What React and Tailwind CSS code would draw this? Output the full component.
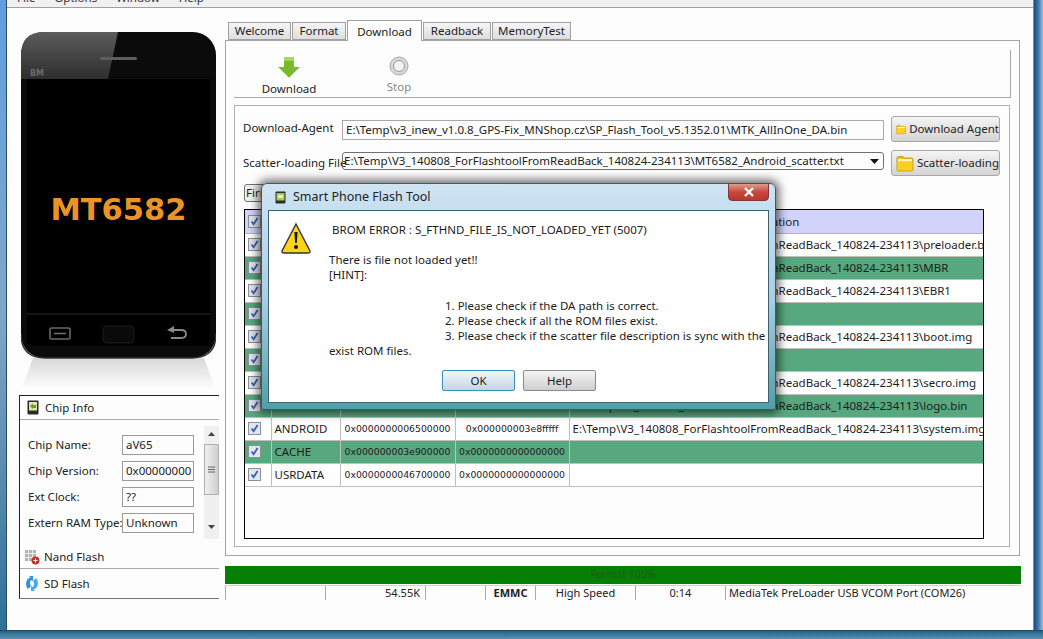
const tabs = [
  { name: "Welcome", w: "w-[63px]" },
  { name: "Format", w: "w-[54px]" },
  { name: "Download", w: "w-[75px]", active: true },
  { name: "Readback", w: "w-[68px]" },
  { name: "MemoryTest", w: "w-[79px]" },
];

const base = "E:\\Temp\\V3_140808_ForFlashtoolFromReadBack_140824-234113\\";

const rows = [
  { loc: base + "preloader.bin" },
  { loc: base + "MBR", green: true },
  { loc: base + "EBR1" },
  { green: true },
  { loc: base + "boot.img" },
  { green: true },
  { loc: base + "secro.img" },
  { loc: base + "logo.bin", green: true },
  { name: "ANDROID", begin: "0x0000000006500000", end: "0x000000003e8fffff", loc: base + "system.img" },
  { name: "CACHE", begin: "0x000000003e900000", end: "0x0000000000000000", green: true },
  { name: "USRDATA", begin: "0x0000000046700000", end: "0x0000000000000000" },
];

const chipFields = [
  ["Chip Name:", "aV65"],
  ["Chip Version:", "0x00000000"],
  ["Ext Clock:", "??"],
  ["Extern RAM Type:", "Unknown"],
];

function Check() {
  return (
    <span className="flex h-[13px] w-[13px] items-center justify-center border border-[#8e8f8f] bg-[#dfe6f2]">
      <svg width="9" height="9" viewBox="0 0 9 9">
        <path d="M1.5 4.5 L3.6 7.2 L7.6 1" fill="none" stroke="#3d5fa8" strokeWidth="1.8" />
      </svg>
    </span>
  );
}

function Folder() {
  return (
    <svg width="18" height="17" viewBox="0 0 18 17">
      <path d="M1 3 Q1 1.5 2.5 1.5 H7 L8.5 3 H16 Q17 3 17 4 V15 Q17 16 16 16 H2 Q1 16 1 15 Z" fill="#f2bc16" stroke="#b98d10" strokeWidth="0.8" />
      <rect x="2" y="4" width="14" height="2.5" fill="#fff3c0" />
      <rect x="1.5" y="6.5" width="15" height="9" fill="#fdd01f" />
    </svg>
  );
}

function FolderButton({ label }) {
  return (
    <button className="flex h-[26px] w-[109px] items-center gap-[3px] rounded-[3px] border border-[#a8a8a8] bg-linear-to-b from-[#f4f4f4] to-[#d4d4d4] pl-[4px] text-[11.5px] whitespace-nowrap text-[#222]">
      <Folder />
      {label}
    </button>
  );
}

function Phone() {
  return (
    <div className="relative ml-[14px] mt-[24px] h-[358px] w-[195px]">
      <svg className="absolute inset-0" width="195" height="358" viewBox="0 0 195 358">
        <defs>
          <linearGradient id="refl" x1="0" y1="0" x2="0" y2="1">
            <stop offset="0" stopColor="#d8d8d8" />
            <stop offset="1" stopColor="#ffffff" />
          </linearGradient>
          <linearGradient id="glare" x1="0" y1="0" x2="0" y2="1">
            <stop offset="0" stopColor="#5c5c5c" />
            <stop offset="1" stopColor="#2e2e2e" />
          </linearGradient>
        </defs>
        <path d="M12 326 H183 Q190 345 195 358 H0 Q5 345 12 326 Z" fill="url(#refl)" />
        <rect x="0" y="0" width="195" height="326" rx="23" fill="#0b0b0b" />
        <path d="M0 326 m0 -24 Q0 326 24 326 H171 Q195 326 195 302" fill="none" stroke="#333" strokeWidth="1.5" />
        <path d="M23 0 H97 L87 47 H0 V23 Q0 0 23 0 Z" fill="url(#glare)" />
        <rect x="79" y="25" width="37" height="3" rx="1.5" fill="#5e5e5e" />
        <text x="9" y="44" fontSize="8" fontFamily="DejaVu Sans, sans-serif" fontWeight="700" fill="#6a6a6a">BM</text>
        <rect x="6" y="47" width="183" height="267" fill="#000" />
        <line x1="6" y1="282" x2="189" y2="282" stroke="#2a2a2a" />
        <rect x="29" y="296" width="20" height="11" rx="1.5" fill="none" stroke="#6a6a6a" strokeWidth="1.6" />
        <line x1="33" y1="301.5" x2="45" y2="301.5" stroke="#6a6a6a" strokeWidth="1.6" />
        <rect x="82" y="294" width="31" height="17" rx="4" fill="#0a0a0a" stroke="#1d1d1d" />
        <path d="M148 298 H160 Q165 298 165 302 Q165 306 160 306 H150" fill="none" stroke="#8a8a8a" strokeWidth="1.8" />
        <path d="M153 294 L146 298 L153 301 Z" fill="#8a8a8a" />
      </svg>
      <div className="absolute inset-x-0 top-[159px] text-center font-['DejaVu_Sans'] text-[30.5px] leading-[38px] font-bold text-[#ea9426]">
        MT6582
      </div>
    </div>
  );
}

function ChipPanel() {
  return (
    <div className="ml-[12px] mt-[5px] h-[204px] w-[200px] border-t border-l border-b border-t-[#222] border-l-[#222] border-b-[#777] text-[11.5px] text-[#222]">
      <div className="flex h-[24px] items-center gap-[6px] border-b border-[#aaa] pl-[7px]">
        <svg width="12" height="15" viewBox="0 0 12 15">
          <rect x="0.5" y="0.5" width="11" height="14" rx="1" fill="#2a2a2a" />
          <rect x="2" y="2" width="8" height="8.5" fill="#dfe8b0" />
          <path d="M3 6 L6 3.5 V5 H9 V8 H6 V9 Z" fill="#6a9a30" />
        </svg>
        Chip Info
      </div>
      <div className="flex h-[125px]">
        <div className="flex w-[184px] flex-col gap-[6px] pl-[8px] pt-[15px]">
          {chipFields.map(([label, value]) => (
            <div key={label} className="flex items-center">
              <span className="w-[94px] whitespace-nowrap">{label}</span>
              <span className="flex h-[20px] w-[72px] items-center border border-[#9a9a9a] pl-[3px]">{value}</span>
            </div>
          ))}
        </div>
        <div className="mt-[6px] flex h-[113px] w-[15px] flex-col items-center bg-[#f0f0f0]">
          <svg className="mt-[6px]" width="7" height="4" viewBox="0 0 7 4">
            <path d="M0 4 L3.5 0 L7 4 Z" fill="#444" />
          </svg>
          <div className="mt-[8px] flex h-[51px] w-[15px] items-center justify-center border border-[#b0b0b0] bg-linear-to-r from-[#f0f0f0] to-[#cfcfcf]">
            <svg width="7" height="7" viewBox="0 0 7 7">
              <path d="M0 1 H7 M0 3.5 H7 M0 6 H7" stroke="#666" />
            </svg>
          </div>
          <svg className="mt-[30px]" width="7" height="4" viewBox="0 0 7 4">
            <path d="M0 0 L3.5 4 L7 0 Z" fill="#444" />
          </svg>
        </div>
      </div>
      <div className="flex h-[24px] items-center gap-[4px] border-b border-[#aaa] pl-[4px]">
        <svg width="16" height="16" viewBox="0 0 16 16">
          <rect x="1" y="1" width="11" height="11" fill="#b4b4b4" />
          <path d="M4.5 1 V12 M8.5 1 V12 M1 4.5 H12 M1 8.5 H12" stroke="#eee" />
          <circle cx="11.5" cy="11.5" r="4" fill="#c9302c" />
          <path d="M9.5 11.5 H13.5 M11.5 9.5 V13.5" stroke="#fff" />
        </svg>
        Nand Flash
      </div>
      <div className="flex h-[29px] items-center gap-[5px] pl-[5px]">
        <svg width="14" height="15" viewBox="0 0 14 15">
          <path d="M6 1 Q1 3 1 8 Q1 11 3 13 L6 10 Q4 7 6 4 L8 5 L8 0 L3 0 Z" fill="#2f8fe0" />
          <path d="M8 14 Q13 12 13 7 Q13 4 11 2 L8 5 Q10 8 8 11 L6 10 L6 15 L11 15 Z" fill="#4aa8ee" />
        </svg>
        SD Flash
      </div>
    </div>
  );
}

function PartitionTable() {
  return (
    <div className="mt-[7px] ml-[9px] h-[330px] w-[740px] border border-black text-[11.5px] text-[#1c1c1c]">
      <table className="w-full table-fixed border-collapse">
        <colgroup>
          <col className="w-[26px]" />
          <col className="w-[69px]" />
          <col className="w-[115px]" />
          <col className="w-[114px]" />
          <col />
        </colgroup>
        <thead>
          <tr className="h-[23px] bg-[#d2d2fa]">
            <th className="border-r border-b border-[#b4b4b4] pl-[3px] font-normal"><Check /></th>
            <th className="border-r border-b border-[#b4b4b4] font-normal">Name</th>
            <th className="border-r border-b border-[#b4b4b4] font-normal">Begin Address</th>
            <th className="border-r border-b border-[#b4b4b4] font-normal">End Address</th>
            <th className="border-b border-[#b4b4b4] font-normal">Location</th>
          </tr>
        </thead>
        <tbody>
          {rows.map((row, i) => (
            <tr key={i} className={row.green ? "h-[23px] bg-[#57a87e]" : "h-[23px] bg-white"}>
              <td className="border-r border-b border-[#c0c0c0] pl-[3px]"><Check /></td>
              <td className="border-r border-b border-[#c0c0c0] pl-[3px]">{row.name}</td>
              <td className="border-r border-b border-[#c0c0c0] text-center font-['DejaVu_Sans'] text-[9.3px]">{row.begin}</td>
              <td className="border-r border-b border-[#c0c0c0] text-center font-['DejaVu_Sans'] text-[9.3px]">{row.end}</td>
              <td className="overflow-hidden border-b border-[#c0c0c0] pl-[3px] whitespace-nowrap">{row.loc}</td>
            </tr>
          ))}
        </tbody>
      </table>
    </div>
  );
}

function ErrorDialog() {
  return (
    <div className="absolute left-[261px] top-[183px] flex h-[227px] w-[515px] flex-col rounded-t-[6px] rounded-b-[3px] border border-[#3a5a6a] bg-linear-to-b from-[#cfe3f3] via-[#a9cfe6] to-[#4f9fa8] px-[6px] pb-[6px] shadow-[0_0_10px_3px_rgba(0,0,0,0.6)]">
      <div className="flex h-[26px] items-center gap-[7px] pl-[7px] text-[12.5px] text-[#222]">
        <svg width="11" height="13" viewBox="0 0 11 13">
          <rect x="0.5" y="0.5" width="10" height="12" rx="1" fill="#2c2c2c" />
          <rect x="1.5" y="2" width="8" height="7.5" fill="#9fd04a" />
          <rect x="3" y="4" width="5" height="3" fill="#e8f0c0" />
        </svg>
        Smart Phone Flash Tool
        <div className="absolute right-[6px] top-[-1px] flex h-[18px] w-[41px] items-center justify-center rounded-b-[4px] border border-[#7a3a3a] bg-linear-to-b from-[#dd9a90] via-[#c9483a] to-[#b8382c]">
          <svg width="12" height="10" viewBox="0 0 12 10">
            <path d="M2 1 L10 9 M10 1 L2 9" stroke="#fff" strokeWidth="2.4" />
          </svg>
        </div>
      </div>
      <div className="flex-1 border border-[#40606e] bg-white text-[11.5px] leading-[15px] text-[#1c1c1c]">
        <div className="relative pl-[60px] pt-[11px]">
          <svg className="absolute left-[11px] top-[11px]" width="32" height="32" viewBox="0 0 32 32">
            <path d="M16 2 L30 29 Q30.5 31 28 31 H4 Q1.5 31 2 29 Z" fill="#fbd515" stroke="#333" strokeWidth="1.4" />
            <path d="M14.4 10 H17.6 L16.8 21 H15.2 Z" fill="#111" />
            <circle cx="16" cy="25" r="2" fill="#111" />
          </svg>
          <p className="pl-[3px]">BROM ERROR : S_FTHND_FILE_IS_NOT_LOADED_YET (5007)</p>
          <p className="mt-[15px]">There is file not loaded yet!!</p>
          <p>[HINT]:</p>
          <div className="mt-[16px] pl-[116px] whitespace-nowrap">
            <p>1. Please check if the DA path is correct.</p>
            <p>2. Please check if all the ROM files exist.</p>
            <p>3. Please check if the scatter file description is sync with the</p>
          </div>
          <p>exist ROM files.</p>
          <div className="mt-[12px] flex gap-[8px] pl-[113px]">
            <button className="h-[21px] w-[73px] rounded-[2px] border border-[#3a8fb8] bg-linear-to-b from-[#f2f7fa] to-[#c5d6e0]">OK</button>
            <button className="h-[21px] w-[73px] rounded-[2px] border border-[#8a8a8a] bg-linear-to-b from-[#f4f4f4] to-[#cfcfcf]">Help</button>
          </div>
        </div>
      </div>
    </div>
  );
}

export default function App() {
  return (
    <div className="relative flex h-[639px] w-[1043px] flex-col overflow-hidden bg-[#2f5f90] font-['Noto_Sans',sans-serif]">
      <div className="flex h-[630px]">
        <div className="w-[7px] border-r border-[#2b4a66] bg-linear-to-b from-[#5f9ee0] via-[#7fa8c8] to-[#2f7096]" />

        <div className="flex w-[1026px] flex-col">
          <div className="h-[8px] overflow-hidden border-b border-[#a0a0a0] bg-[#f0f0f0] text-[11.5px] leading-[14px] text-[#333]">
            <div className="-mt-[9px] flex gap-[19px] pl-[10px]">
              <span>File</span>
              <span>Options</span>
              <span>Window</span>
              <span>Help</span>
            </div>
          </div>

          <div className="flex h-[622px] bg-[#fdfdfd]">
            <div className="w-[218px]">
              <Phone />
              <ChipPanel />
            </div>

            <div className="w-[808px] text-[11.5px] text-[#222]">
              <div className="mt-[11px] flex h-[21px] items-end pl-[3px] gap-[1px]">
                {tabs.map((tab) => (
                  <div
                    key={tab.name}
                    className={
                      tab.active
                        ? `-mb-px flex h-[21px] ${tab.w} items-start justify-center border border-b-0 border-[#a0a0a0] bg-[#fdfdfd] pt-[2px]`
                        : `flex h-[18px] ${tab.w} items-center justify-center border border-[#a0a0a0] bg-linear-to-b from-[#f6f6f6] to-[#dedede]`
                    }
                  >
                    {tab.name}
                  </div>
                ))}
              </div>

              <div className="h-[516px] w-[795px] border border-[#a4a4a4] pl-[8px] pt-[9px]">
                <div className="flex h-[48px] w-[777px] border-r border-b border-[#a8a8a8]">
                  <div className="flex w-[110px] flex-col items-center pt-[7px]">
                    <svg width="22" height="21" viewBox="0 0 22 21">
                      <path d="M6 0 H16 V10 H22 L11 21 L0 10 H6 Z" fill="#7ab82c" />
                      <path d="M6 0 H16 V4 H6 Z" fill="#a8d860" />
                    </svg>
                    <span className="mt-[2px]">Download</span>
                  </div>
                  <div className="flex w-[110px] flex-col items-center pt-[6px] text-[#888]">
                    <svg width="20" height="20" viewBox="0 0 20 20">
                      <circle cx="10" cy="10" r="9" fill="#d8d8d8" stroke="#a8a8a8" />
                      <circle cx="10" cy="10" r="5.5" fill="#f2f2f2" stroke="#9a9a9a" />
                    </svg>
                    <span className="mt-[2px]">Stop</span>
                  </div>
                </div>

                <div className="mt-[7px] h-[442px] w-[776px] border border-[#b0b0b0]">
                  <div className="mt-[10px] flex h-[26px] items-center gap-[7px] pl-[8px] pr-[9px]">
                    <span className="-mt-[3px] w-[92px] whitespace-nowrap">Download-Agent</span>
                    <div className="mt-[2px] flex h-[20px] w-[542px] items-center overflow-hidden border border-[#a8a8a8] pl-[3px] whitespace-nowrap">
                      E:\Temp\v3_inew_v1.0.8_GPS-Fix_MNShop.cz\SP_Flash_Tool_v5.1352.01\MTK_AllInOne_DA.bin
                    </div>
                    <FolderButton label="Download Agent" />
                  </div>
                  <div className="mt-[8px] flex h-[26px] items-center gap-[7px] pl-[8px] pr-[9px]">
                    <span className="w-[92px] whitespace-nowrap">Scatter-loading File</span>
                    <div className="-mt-[4px] flex h-[18px] w-[542px] items-center overflow-hidden rounded-[3px] border border-[#707070] pl-[1px] whitespace-nowrap">
                      <span className="flex-1">E:\Temp\V3_140808_ForFlashtoolFromReadBack_140824-234113\MT6582_Android_scatter.txt</span>
                      <svg className="mr-[4px] shrink-0" width="9" height="5" viewBox="0 0 9 5">
                        <path d="M0 0 H9 L4.5 5 Z" fill="#111" />
                      </svg>
                    </div>
                    <FolderButton label="Scatter-loading" />
                  </div>
                  <div className="ml-[9px] mt-[8px] flex h-[18px] w-[120px] items-center rounded-[3px] border border-[#707070] bg-[#f0f0f0] pl-[1px]">
                    Firmware -&gt; Upgrade
                  </div>
                  <PartitionTable />
                </div>
              </div>

              <div className="relative mt-[10px] flex h-[18px] w-[796px] items-center justify-center bg-[#058005] text-[10.5px] text-[#1c5a1c]">
                Format 100%
              </div>

              <div className="mt-[1px] flex h-[15px] w-[796px] border-t border-[#c8d8c8] text-[11px] leading-[14px] text-[#222]">
                <div className="w-[100px] border-l border-[#aaa]" />
                <div className="w-[100px] border-l border-[#aaa] pr-[5px] text-right">54.55K</div>
                <div className="w-[60px] border-l border-[#aaa]" />
                <div className="w-[50px] border-l border-[#aaa] text-center font-bold">EMMC</div>
                <div className="w-[100px] border-l border-[#aaa] text-center">High Speed</div>
                <div className="w-[90px] border-l border-[#aaa] text-center">0:14</div>
                <div className="flex-1 border-l border-[#aaa] pl-[3px] whitespace-nowrap">MediaTek PreLoader USB VCOM Port (COM26)</div>
              </div>
            </div>
          </div>
        </div>

        <div className="w-[10px] border-l border-[#8a8a8a] bg-linear-to-r from-[#1f4a78] via-[#3f7ab0] to-[#9ec4dc]" />
      </div>
      <div className="h-[9px] border-t border-[#1d4a6a] bg-linear-to-b from-[#23638a] to-[#5d90b0]" />
      <ErrorDialog />
    </div>
  );
}
